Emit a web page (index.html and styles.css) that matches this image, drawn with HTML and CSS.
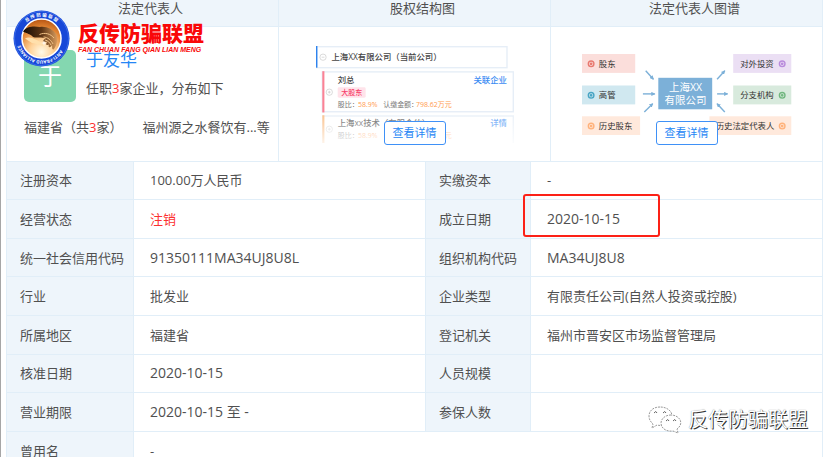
FILE: index.html
```html
<!DOCTYPE html>
<html lang="zh-CN">
<head>
<meta charset="utf-8">
<title>企业工商信息</title>
<link rel="stylesheet" href="styles.css">
</head>
<body>
<main class="page">
  <table class="summary">
    <thead>
      <tr><th scope="col">法定代表人</th><th scope="col">股权结构图</th><th scope="col">法定代表人图谱</th></tr>
    </thead>
    <tbody>
      <tr>
        <td class="person-cell">
          <div class="person">
            <span class="avatar">于</span>
            <div class="person-info">
              <a class="person-name" href="#person">于友华</a>
              <p>任职<em>3</em>家企业，分布如下</p>
            </div>
          </div>
          <p class="regions"><span>福建省（共<em>3</em>家）</span><span>福州源之水餐饮有...等</span></p>
        </td>
        <td class="preview">
          <svg class="equity" viewBox="0 0 283 140" role="img" aria-label="股权结构图">
            <defs>
              <linearGradient id="fade" x1="0" y1="0" x2="0" y2="1"><stop offset="0" stop-color="#fff" stop-opacity="0.200"/><stop offset="1" stop-color="#fff" stop-opacity="0.850"/></linearGradient>
            </defs>
            <g class="card">
              <rect x="1" y="1" width="272" height="30"/>
              <rect x="9" y="37" width="273" height="57"/>
            </g>
            <rect x="0" y="0" width="2" height="31" fill="#2d83ee"/>
            <rect x="9" y="36" width="3" height="59" fill="#fb8295"/>
            <g class="toggle">
              <circle cx="10" cy="16" r="4.500"/><path d="M8 16h4"/>
              <circle cx="19" cy="66" r="4.500"/><path d="M17 66h4M19 64v4"/>
            </g>
            <text class="strong" x="22" y="20">上海XX有限公司（当前公司）</text>
            <text class="strong" x="31" y="53">刘总</text>
            <text class="link" x="273" y="53">关联企业</text>
            <rect x="31" y="59" width="40" height="15" rx="2" fill="#ffe3ea"/>
            <text class="tag" x="51" y="70">大股东</text>
            <text class="small" x="31" y="87">股比：</text>
            <text class="small amount" x="60" y="87">58.9%</text>
            <text class="small" x="96" y="87">认缴金额：</text>
            <text class="small amount" x="143" y="87">798.62万元</text>
            <path class="card-open" d="M10 140V100h272v40"/>
            <rect x="9" y="99" width="3" height="41" fill="#fab574"/>
            <g class="toggle"><circle cx="19" cy="119" r="4.500"/><path d="M17 119h4M19 117v4"/></g>
            <text class="strong" x="31" y="115">上海xx技术（有限合伙）</text>
            <text class="link" x="273" y="115">详情</text>
            <text class="small" x="31" y="132">股比：</text>
            <text class="small amount" x="60" y="132">58.9%</text>
            <text class="small amount" x="143" y="132">798.62万元</text>
            <rect x="8" y="98" width="275" height="42" fill="url(#fade)"/>
          </svg>
          <button class="detail-button" type="button">查看详情</button>
        </td>
        <td class="preview">
          <svg class="atlas" viewBox="0 0 300 117" role="img" aria-label="法定代表人图谱">
            <defs>
              <marker id="tip" viewBox="0 0 6 6" refX="5" refY="3" markerWidth="6" markerHeight="6" orient="auto" markerUnits="userSpaceOnUse"><path d="M0 0L6 3L0 6Z" fill="#7cb0d8"/></marker>
            </defs>
            <rect width="76" height="27" fill="#fbdedb"/>
            <rect y="45" width="76" height="27" fill="#d0e8f0"/>
            <rect y="89" width="83" height="27" fill="#ffe9dc"/>
            <rect x="109" y="34" width="77" height="45" fill="#7cb0d8"/>
            <rect x="216" width="83" height="27" fill="#ebdff4"/>
            <rect x="216" y="45" width="83" height="27" fill="#d8eadd"/>
            <rect x="182" y="89" width="117" height="27" fill="#ffe9dc"/>
            <g class="arrows">
              <path d="M91 24L102 36"/><path d="M87 57H104"/><path d="M89 83L101 71"/>
              <path d="M193 36L204 24"/><path d="M193 57H208"/><path d="M204 83L193 71"/>
            </g>
            <g class="dots">
              <g stroke="#e87970"><circle cx="13" cy="14" r="4"/><circle cx="13" cy="14" r="1"/></g>
              <g stroke="#49a5c4"><circle cx="13" cy="59" r="4"/><circle cx="13" cy="59" r="1"/></g>
              <g stroke="#ffb27b"><circle cx="13" cy="103" r="4"/><circle cx="13" cy="103" r="1"/></g>
              <g stroke="#b98bdc"><circle cx="286" cy="14" r="4"/><circle cx="286" cy="14" r="1"/></g>
              <g stroke="#72b780"><circle cx="286" cy="59" r="4"/><circle cx="286" cy="59" r="1"/></g>
              <g stroke="#ffb27b"><circle cx="286" cy="103" r="4"/><circle cx="286" cy="103" r="1"/></g>
            </g>
            <g class="node">
              <text x="24" y="18">股东</text><text x="24" y="63">高管</text><text x="24" y="107">历史股东</text>
              <text x="226" y="18">对外投资</text><text x="226" y="63">分支机构</text><text x="191" y="107">历史法定代表人</text>
            </g>
            <text class="center" x="148" y="53">上海XX</text>
            <text class="center" x="148" y="72">有限公司</text>
          </svg>
          <button class="detail-button" type="button">查看详情</button>
        </td>
      </tr>
    </tbody>
  </table>

  <table class="details">
    <colgroup><col class="label-wide"><col><col class="label-narrow"><col></colgroup>
    <tbody>
      <tr><th scope="row">注册资本</th><td>100.00万人民币</td><th scope="row">实缴资本</th><td>-</td></tr>
      <tr><th scope="row">经营状态</th><td class="cancelled">注销</td><th scope="row">成立日期</th><td class="numeric marked">2020-10-15</td></tr>
      <tr><th scope="row">统一社会信用代码</th><td class="numeric">91350111MA34UJ8U8L</td><th scope="row">组织机构代码</th><td class="numeric">MA34UJ8U8</td></tr>
      <tr><th scope="row">行业</th><td>批发业</td><th scope="row">企业类型</th><td>有限责任公司(自然人投资或控股)</td></tr>
      <tr><th scope="row">所属地区</th><td>福建省</td><th scope="row">登记机关</th><td>福州市晋安区市场监督管理局</td></tr>
      <tr><th scope="row">核准日期</th><td class="numeric">2020-10-15</td><th scope="row">人员规模</th><td></td></tr>
      <tr><th scope="row">营业期限</th><td class="numeric">2020-10-15 至 -</td><th scope="row">参保人数</th><td></td></tr>
      <tr><th scope="row">曾用名</th><td colspan="3">-</td></tr>
    </tbody>
  </table>
</main>

<div class="brand">
  <svg class="emblem" viewBox="0 0 114 114" aria-hidden="true">
    <defs>
      <radialGradient id="glow" cx="0.500" cy="0.850" r="0.850">
        <stop offset="0" stop-color="#fffbe8"/><stop offset="0.350" stop-color="#ffd39a"/><stop offset="0.750" stop-color="#e18432"/><stop offset="1" stop-color="#b65312"/>
      </radialGradient>
      <linearGradient id="hand" x1="0" x2="1"><stop offset="0" stop-color="#140a04"/><stop offset="0.550" stop-color="#5c3414"/><stop offset="1" stop-color="#d69a5c"/></linearGradient>
      <path id="ring" d="M57 101A44 44 0 0 1 57 13A44 44 0 0 1 57 101"/>
      <path id="ring-low" d="M57 13A44 44 0 0 1 57 101A44 44 0 0 1 57 13"/>
    </defs>
    <circle cx="57" cy="57" r="56" fill="#1747d8"/>
    <circle cx="57" cy="57" r="54" fill="none" stroke="#5b8cf5" stroke-width="1"/>
    <circle cx="57" cy="57" r="39" fill="url(#glow)" stroke="#fff" stroke-width="3"/>
    <path d="M20 43C27 32 43 32 54 34C67 32 80 39 86 48C91 59 87 73 81 79C77 79 79 73 78 70C75 77 69 75 72 69C66 72 64 68 69 63C60 65 57 61 66 57C53 53 47 57 40 54C36 48 27 47 20 43Z" fill="url(#hand)"/>
    <path d="M53 49C64 44 76 48 82 56M61 54C69 54 77 61 80 68M64 60C70 61 74 66 76 70" fill="none" stroke="#f2c387" stroke-width="2"/>
    <path d="M24 57C35 51 47 60 58 66L64 73C54 71 46 66 38 66Z" fill="#ffe0ac"/>
    <path d="M62 60l1 5 5 1-5 1-1 6-1-6-5-1 5-1z" fill="#fff"/>
    <text class="ring-zh"><textPath href="#ring" startOffset="50%">反 传 防 骗 联 盟</textPath></text>
    <text class="ring-en"><textPath href="#ring-low" startOffset="52%">ANTI-FRAUD ALLIANCE</textPath></text>
  </svg>
  <div class="brand-text">
    <strong>反传防骗联盟</strong>
    <span>FAN CHUAN FANG QIAN LIAN MENG</span>
  </div>
</div>

<div class="account">
  <svg viewBox="0 0 34 28" aria-hidden="true">
    <g fill="#fff" stroke="#999" stroke-width="1" stroke-dasharray="2 1">
      <path d="M12 1C5 1 1 5 1 10c0 4 2 6 4 8l-1 4 5-3c8 2 15-2 15-9 0-5-5-9-12-9Z"/>
      <path d="M23 9c-6 0-10 4-10 8 0 5 5 9 12 8l5 2-1-4c8-6 2-14-6-14Z"/>
    </g>
    <path d="M6 7q2-3 3 0M15 7q2-3 3 0M18 15q2-3 3 0M25 15q2-3 3 0" fill="none" stroke="#666"/>
  </svg>
  <span>反传防骗联盟</span>
</div>
</body>
</html>
```
FILE: styles.css
```css
*,
*::after {
  box-sizing: border-box;
}

html {
  overflow: hidden;
}

body {
  position: relative;
  height: 100vh;
  margin: 0;
  overflow: hidden;
  border-left: 1px solid #a6a6a6;
  background: #fff;
  color: #505050;
  font: 13px/20px "Open Sans", "Noto Sans CJK SC", sans-serif;
}

p {
  margin: 0;
}

em {
  color: #fc3030;
  font-style: normal;
}

.page {
  padding: 0 11px 0 5px;
}

table {
  width: 100%;
  border-collapse: collapse;
  table-layout: fixed;
}

th,
td {
  border: 1px solid #e1eef8;
  font-weight: 400;
}

th {
  background: #eef5fb;
}

.summary th {
  height: 26px;
  padding: 0 0 9px 16px;
  border-top: 0;
  line-height: 16px;
}

.summary td {
  height: 135px;
  padding: 0;
  vertical-align: top;
}

.summary .person-cell {
  padding: 23px 0 0 17px;
}

.person {
  display: flex;
  gap: 10px;
}

.avatar {
  width: 52px;
  height: 52px;
  border-radius: 5px;
  background: #84d7b0;
  color: #fff;
  font-size: 24px;
  line-height: 52px;
  text-align: center;
}

.person-name {
  display: block;
  margin-bottom: 8px;
  color: #2586f5;
  font-size: 17px;
  text-decoration: none;
}

.regions {
  display: flex;
  gap: 20px;
  margin-top: 15px;
  white-space: nowrap;
}

.preview {
  position: relative;
}

.preview svg {
  display: block;
  margin: 0 auto;
}

.preview .equity {
  width: 198px;
  margin-top: 19px;
}

.preview .atlas {
  width: 210px;
  margin-top: 27px;
}

.card rect,
.card-open {
  fill: #fff;
  stroke: #e6eef7;
  stroke-width: 2px;
}

.toggle {
  fill: none;
  stroke: #ccc;
}

.equity text {
  fill: #444;
  font-size: 12px;
}

.equity .strong {
  font-weight: 500;
}

.equity .link {
  fill: #3d8df3;
  font-weight: 500;
  text-anchor: end;
}

.equity .tag {
  fill: #f7436c;
  font-size: 10px;
  font-weight: 500;
  text-anchor: middle;
}

.equity .small {
  fill: #777;
  font-size: 10px;
}

.equity .amount {
  fill: #ff9a4e;
}

.arrows path {
  stroke: #7cb0d8;
  stroke-width: 2px;
  marker-end: url(#tip);
}

.dots {
  fill: none;
  stroke-width: 2px;
}

.node {
  fill: #333;
  font-size: 12px;
}

.center {
  fill: #fff;
  font-size: 15px;
  text-anchor: middle;
}

.detail-button {
  position: absolute;
  bottom: 16px;
  left: 50%;
  width: 62px;
  height: 24px;
  padding: 0;
  transform: translateX(-50%);
  border: 1px solid #3f91f7;
  border-radius: 3px;
  background: #fff;
  color: #2586f5;
  font: inherit;
  font-size: 11px;
}

.details {
  height: 310px;
  margin-top: -1px;
}

.label-wide {
  width: 127px;
}

.label-narrow {
  width: 105px;
}

.details th {
  padding: 0 0 0 13px;
  text-align: left;
  white-space: nowrap;
}

.details td {
  padding: 0 16px;
}

.details .numeric {
  font-size: 14px;
}

.details .cancelled {
  color: #fc3030;
}

.marked {
  position: relative;
}

.marked::after {
  position: absolute;
  top: -6px;
  left: -8px;
  width: 137px;
  height: 43px;
  border: 2px solid #fc2117;
  border-radius: 3px;
  content: "";
}

.brand {
  position: absolute;
  top: 10px;
  left: 12px;
  display: flex;
  gap: 8px;
  color: #f90808;
}

.emblem {
  width: 57px;
  height: 57px;
}

.brand-text {
  padding-top: 12px;
  white-space: nowrap;
}

.brand-text strong,
.brand-text span {
  display: block;
}

.brand-text strong {
  font-size: 21px;
  font-weight: 900;
  line-height: 22px;
}

.brand-text span {
  font: italic 700 7px/11px "Liberation Sans", sans-serif;
}

.ring-zh,
.ring-en {
  fill: #fff;
  font-size: 9px;
  font-weight: 700;
  text-anchor: middle;
}

.account {
  position: absolute;
  right: 26px;
  bottom: 22px;
  display: flex;
  align-items: center;
  gap: 6px;
  color: #fff;
  font-size: 20px;
  line-height: 30px;
  text-shadow: 1px 1px 0 #333, 0 0 1px #777;
}

.account svg {
  width: 34px;
  height: 28px;
}
```
